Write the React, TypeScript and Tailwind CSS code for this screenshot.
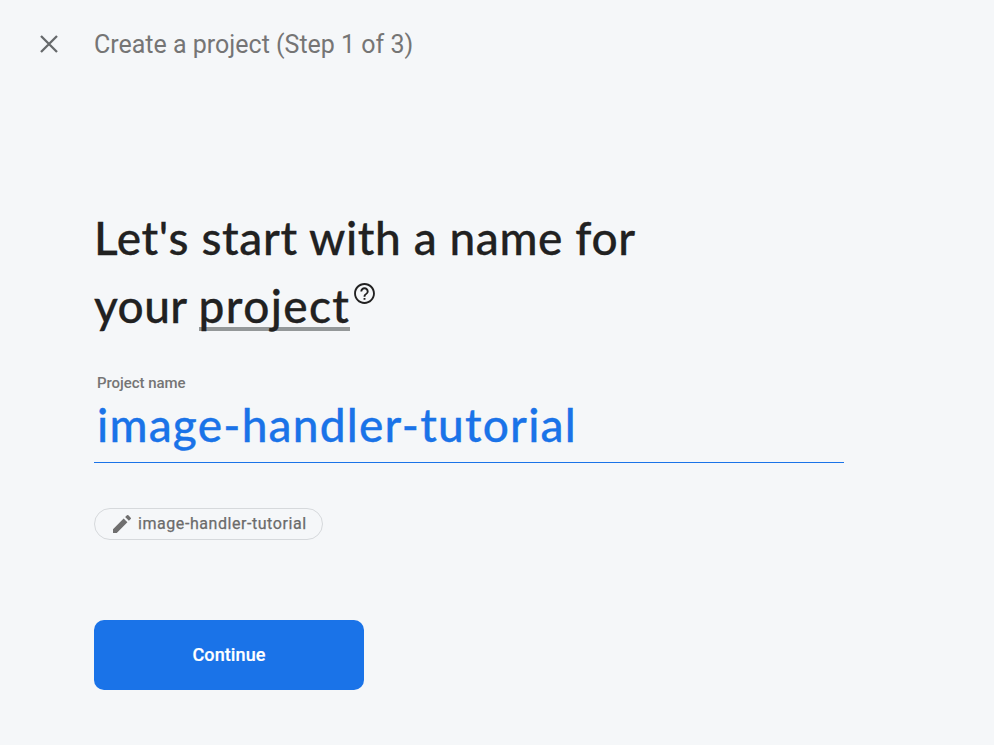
export default function App() {
  return (
    <main className="h-[745px] w-full overflow-hidden bg-[#f5f7f9] font-['Roboto',sans-serif]">
      <header className="flex h-[88px] items-center pl-[37px]">
        <button aria-label="Close" className="size-6">
          <svg viewBox="0 0 24 24" className="size-6" fill="none" stroke="#66696b" strokeWidth="2.3"><path d="M4 4 20 20M20 4 4 20" /></svg>
        </button>
        <h1 className="mt-[2px] ml-[33px] text-[25px] whitespace-nowrap text-[#757575]">Create a project (Step 1 of 3)</h1>
      </header>
      <section className="ml-[94px] w-[750px] pt-[116px]">
        <h2 className="font-['Lato',sans-serif] text-[46px] leading-[68px] font-medium text-[#212121] [-webkit-text-stroke:0.3px_#212121]">
          <span className="block tracking-[0.63px]">Let's start with a name for</span>
          <span className="flex">
            <span className="tracking-[0.4px]">your&nbsp;</span>
            <span className="h-[59px] bg-[linear-gradient(#949899,#949899)] bg-[length:100%_4px] bg-bottom bg-no-repeat tracking-[1.35px]">project</span>
            <svg viewBox="0 0 24 24" className="mt-[9px] ml-[2px] size-[25px] shrink-0" fill="#212121"><path d="M11.1 18h1.8v-1.8h-1.8V18zM12 2C6.48 2 2 6.48 2 12s4.48 10 10 10 10-4.48 10-10S17.52 2 12 2zm0 18.2c-4.52 0-8.2-3.68-8.2-8.2S7.48 3.8 12 3.8s8.2 3.68 8.2 8.2-3.68 8.2-8.2 8.2zM12 6c-2.21 0-4 1.79-4 4h1.8c0-1.2 1-2.2 2.2-2.2s2.2 1 2.2 2.2c0 2-3.1 1.9-3.1 5h1.8c0-2.2 3.1-2.6 3.1-5 0-2.21-1.79-4-4-4z" /></svg>
          </span>
        </h2>
        <div className="mt-[33px] h-[90px] border-b border-[#1a73e8] pl-[3px]">
          <div className="text-[15px] leading-5 font-medium tracking-[-0.05px] text-[#757575]">Project name</div>
          <div className="mt-[3px] font-['Lato',sans-serif] text-[46px] leading-[58px] font-medium tracking-[1.22px] text-[#1a73e8] [-webkit-text-stroke:0.3px_#1a73e8]">image-handler-tutorial</div>
        </div>
        <div className="mt-[45px] flex h-8 w-[229px] items-center rounded-full border border-[#d6d9dc] pl-[15px] text-[16px] tracking-[0.56px] text-[#6b6b6b] [-webkit-text-stroke:0.25px_#6b6b6b]">
          <svg viewBox="0 0 24 24" className="mr-1 size-6 shrink-0" fill="#6f6f6f"><path d="M3 17.25V21h3.75L17.4 10.35 13.65 6.6 3 17.25zM20.71 7.04a1 1 0 0 0 0-1.41l-2.34-2.34a1 1 0 0 0-1.41 0l-1.83 1.83 3.75 3.75 1.83-1.83z" /></svg>
          image-handler-tutorial
        </div>
        <button className="mt-20 h-[70px] w-[270px] rounded-[10px] bg-[#1a73e8] pb-[2px] text-[18px] font-medium tracking-[0.1px] text-white [-webkit-text-stroke:0.2px_white]">Continue</button>
      </section>
    </main>
  );
}
